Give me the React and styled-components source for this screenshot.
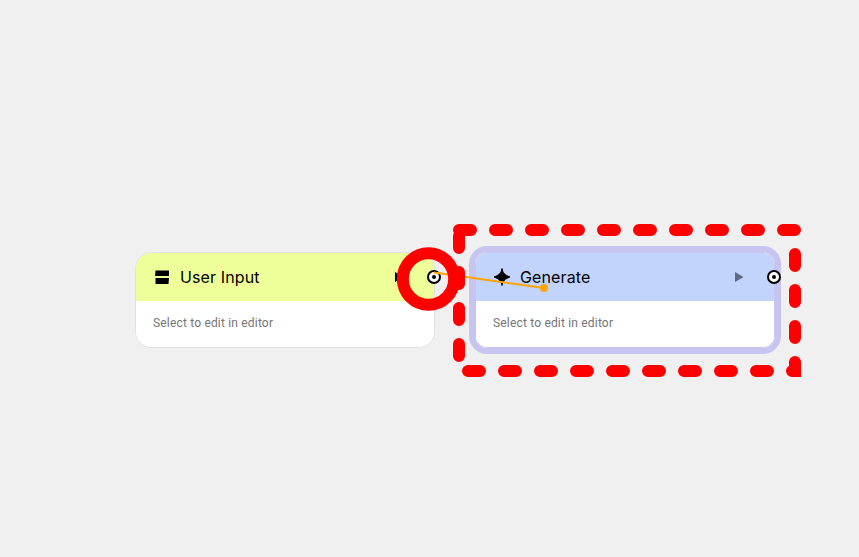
import React from 'react';
import styled, { createGlobalStyle } from 'styled-components';

const Global = createGlobalStyle`
  html, body { margin: 0; padding: 0; background: #f0f0f0; }
  body { font-family: Roboto, "Liberation Sans", sans-serif; }
`;

const Canvas = styled.div`
  position: relative;
  width: 859px;
  height: 557px;
  overflow: hidden;
  background: #f0f0f0;
`;

const Node = styled.div`
  position: absolute;
  left: ${p => p.$x}px;
  top: 252px;
  width: 300px;
  height: 96px;
  box-sizing: border-box;
  display: flex;
  flex-direction: column;
  border-radius: ${p => p.$selected ? 12 : 16}px;
  border: 1px solid ${p => p.$selected ? '#c8c4f0' : '#e1e1e1'};
  outline: ${p => p.$selected ? '6px solid #c8c4f0' : 'none'};
`;

const Header = styled.div`
  display: flex;
  align-items: center;
  height: 48px;
  padding: 0 30px 0 17px;
  background: ${p => p.$color};
  border-radius: ${p => p.$selected ? 11 : 15}px ${p => p.$selected ? 11 : 15}px 0 0;
`;

const Title = styled.span`
  margin-left: 9px;
  flex: 1;
  font-family: Inter, Roboto, sans-serif;
  font-size: 16px;
  font-weight: 400;
  letter-spacing: 0.12px;
  color: #000;
`;

const Body = styled.div`
  flex: 1;
  padding: 14px 17px;
  font-size: 12px;
  letter-spacing: 0.18px;
  line-height: 16px;
  color: #757575;
  background: #fff;
  border-radius: 0 0 ${p => p.$selected ? 11 : 15}px ${p => p.$selected ? 11 : 15}px;
`;

const Port = styled.div`
  position: absolute;
  left: ${p => p.$x - 7}px;
  top: 270px;
  width: 14px;
  height: 14px;
  box-sizing: border-box;
  border: 2.5px solid #000;
  border-radius: 50%;
  background: #fff;
  display: flex;
  align-items: center;
  justify-content: center;
  &::after {
    content: "";
    width: 4px;
    height: 4px;
    border-radius: 50%;
    background: #000;
  }
`;

const Overlay = styled.svg`
  position: absolute;
  left: 0;
  top: 0;
  pointer-events: none;
`;

const InputIcon = () => (
  <svg width="18" height="18" viewBox="0 0 18 18">
    <path d="M2.5 2.5H16V8H2Z" />
    <path d="M2.5 10H16L15.5 16H2.5Z" />
  </svg>
);

const SparkIcon = () => (
  <svg width="18" height="18" viewBox="0 0 18 18">
    <path d="M9 0.5C9.6 4.5 11.5 7 17 9C11.5 11 9.6 13.5 9 17.5C8.4 13.5 6.5 11 1 9C6.5 7 8.4 4.5 9 0.5Z" strokeWidth="1" stroke="#000" strokeLinejoin="miter" />
  </svg>
);

const PlayIcon = ({ color }) => (
  <svg width="10" height="12" viewBox="0 0 10 12">
    <path d="M1 1L9.5 6L1 11Z" fill={color} />
  </svg>
);

export default function App() {
  return (
    <Canvas>
      <Global />
      <Node $x={135}>
        <Header $color="#eeff99">
          <InputIcon />
          <Title>User Input</Title>
          <PlayIcon color="#000" />
        </Header>
        <Body>Select to edit in editor</Body>
      </Node>
      <Port $x={434} />
      <Node $x={475} $selected>
        <Header $color="#c2d4fb" $selected>
          <SparkIcon />
          <Title>Generate</Title>
          <PlayIcon color="#5e6a85" />
        </Header>
        <Body $selected>Select to edit in editor</Body>
      </Node>
      <Port $x={774} />
      <Overlay width="859" height="557">
        <line x1="434" y1="272.5" x2="544" y2="288" stroke="#ffa500" strokeWidth="2" />
        <circle cx="544" cy="288" r="4" fill="#ffa500" />
        <circle cx="428.5" cy="279" r="25.7" fill="none" stroke="#ff0000" strokeWidth="12" />
        <rect x="459" y="230" width="336" height="141" fill="none" stroke="#ff0000" strokeWidth="12" strokeDasharray="12 24" strokeLinecap="round" />
      </Overlay>
    </Canvas>
  );
}
